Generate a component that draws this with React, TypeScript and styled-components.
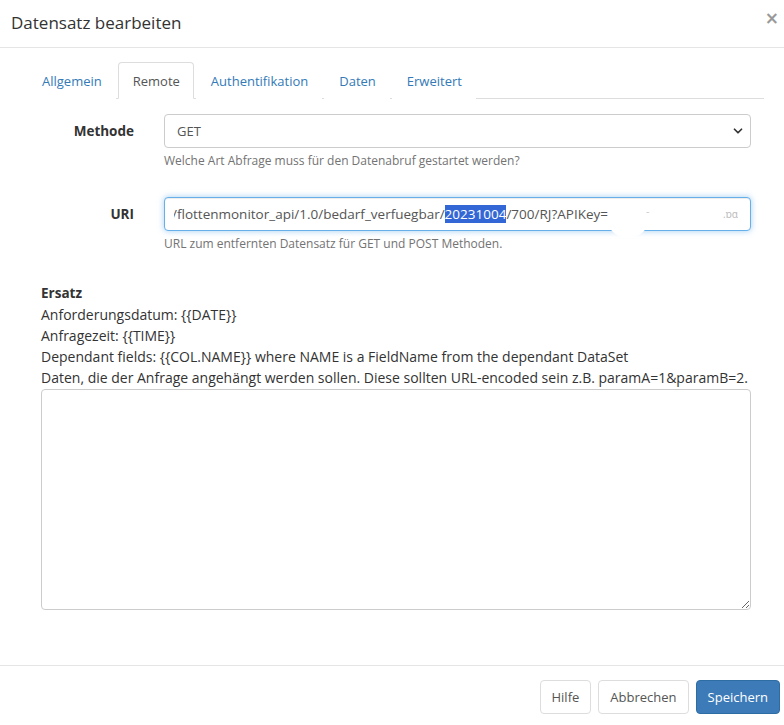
import styled, { createGlobalStyle } from 'styled-components'
import { ChevronDown } from 'lucide-react'

const GlobalStyle = createGlobalStyle`
  html, body {
    margin: 0;
    padding: 0;
    background: #fff;
  }
  body {
    font-family: "Open Sans", "Noto Sans", sans-serif;
    font-size: 13px;
    color: #333;
  }
  * {
    box-sizing: border-box;
  }
`

const tabs = ['Allgemein', 'Remote', 'Authentifikation', 'Daten', 'Erweitert']

const replacements = [
  'Anforderungsdatum: {{DATE}}',
  'Anfragezeit: {{TIME}}',
  'Dependant fields: {{COL.NAME}} where NAME is a FieldName from the dependant DataSet',
  'Daten, die der Anfrage angehängt werden sollen. Diese sollten URL-encoded sein z.B. paramA=1&paramB=2.'
]

export default function App() {
  return (
    <Modal>
      <GlobalStyle />
      <Header>
        <Title>Datensatz bearbeiten</Title>
        <Close>×</Close>
      </Header>

      <Body>
        <TabBar>
          {tabs.map(t => (
            <Tab key={t} $active={t === 'Remote'}>{t}</Tab>
          ))}
        </TabBar>

        <FormRow>
          <Label>Methode</Label>
          <Control>
            <SelectWrap>
              <Select defaultValue="GET">
                <option>GET</option>
                <option>POST</option>
              </Select>
              <Chevron size={14} strokeWidth={3} />
            </SelectWrap>
            <Help>Welche Art Abfrage muss für den Datenabruf gestartet werden?</Help>
          </Control>
        </FormRow>

        <FormRow>
          <Label>URI</Label>
          <Control>
            <FakeInput>
              <InputText>
                <Scrolled>/flottenmonitor_api/1.0/bedarf_verfuegbar/<Selected>20231004</Selected>/700/RJ?APIKey=</Scrolled>
                <Redacted>.. .  ̄</Redacted>
                <RedactedEnd>.ɒɑ</RedactedEnd>
              </InputText>
              <Blob />
            </FakeInput>
            <Help>URL zum entfernten Datensatz für GET und POST Methoden.</Help>
          </Control>
        </FormRow>

        <Replacements>
          <strong>Ersatz</strong>
          {replacements.map(r => (
            <Line key={r}>{r}</Line>
          ))}
        </Replacements>
        <TextArea />
      </Body>

      <Footer>
        <Button>Hilfe</Button>
        <Button>Abbrechen</Button>
        <Button $primary>Speichern</Button>
      </Footer>
    </Modal>
  )
}

const Modal = styled.div`
  width: 784px;
  height: 725px;
  display: flex;
  flex-direction: column;
  background: #fff;
`

const Header = styled.header`
  height: 48px;
  display: flex;
  align-items: center;
  justify-content: space-between;
  padding: 0 5px 2px 11px;
  border-bottom: 1px solid #e5e5e5;
`

const Title = styled.h4`
  margin: 0;
  font-size: 17px;
  font-weight: 400;
  color: #333;
`

const Close = styled.span`
  align-self: flex-start;
  margin-top: 10px;
  font-size: 17px;
  font-weight: 700;
  color: #999;
  line-height: 1;
  font-family: "DejaVu Sans", sans-serif;
`

const Body = styled.div`
  flex: 1;
  padding: 14px 20px 0 25px;
`

const TabBar = styled.ul`
  display: flex;
  list-style: none;
  margin: 0 0 15px 0;
  padding: 0;
  border-bottom: 1px solid #ddd;
`

const Tab = styled.li<{ $active?: boolean }>`
  margin: 0 2px -1px 0;
  padding: 9px 13px 8px 14px;
  border: 1px solid ${p => (p.$active ? '#ddd' : 'transparent')};
  border-bottom-color: ${p => (p.$active ? '#fff' : 'transparent')};
  border-radius: 4px 4px 0 0;
  background: #fff;
  color: ${p => (p.$active ? '#555' : '#337ab7')};
  font-size: 13px;
  &:first-child {
    padding-left: 16px;
  }
`

const FormRow = styled.div`
  display: grid;
  grid-template-columns: 139px 1fr;
  margin-bottom: 28px;
`

const Label = styled.label`
  font-weight: 700;
  text-align: right;
  padding: 8px 30px 0 0;
  font-size: 13.5px;
`

const Control = styled.div`
  width: 587px;
`

const SelectWrap = styled.div`
  position: relative;
`

const Select = styled.select`
  appearance: none;
  width: 100%;
  height: 34px;
  padding: 0 12px;
  border: 1px solid #ccc;
  border-radius: 4px;
  background: #fff;
  font-family: inherit;
  font-size: 13px;
  color: #555;
`

const Chevron = styled(ChevronDown)`
  position: absolute;
  right: 6px;
  top: 10px;
  color: #333;
  pointer-events: none;
`

const Help = styled.p`
  margin: 4px 0 0;
  color: #737373;
  font-size: 12px;
`

const FakeInput = styled.div`
  position: relative;
  height: 34px;
  border: 1px solid #66afe9;
  border-radius: 4px;
  box-shadow: inset 0 1px 1px rgba(0, 0, 0, 0.075), 0 0 6px rgba(102, 175, 233, 0.6);
  background: #fff;
`

const InputText = styled.div`
  position: relative;
  height: 100%;
  margin: 0 12px 0 9px;
  overflow: hidden;
  white-space: nowrap;
  display: flex;
  align-items: center;
  color: #555;
  font-size: 13.5px;
`

const Scrolled = styled.span`
  margin-left: -2px;
`

const Selected = styled.span`
  background: #3367d6;
  color: #fff;
`

const Redacted = styled.span`
  margin-left: 28px;
  color: #bbb;
  font-size: 9px;
`

const RedactedEnd = styled.span`
  margin-left: auto;
  color: #bbb;
  font-size: 10px;
`

const Blob = styled.div`
  position: absolute;
  left: 444px;
  top: 10px;
  width: 38px;
  height: 30px;
  border-radius: 50%;
  background: #fff;
`

const Replacements = styled.div`
  display: flex;
  flex-direction: column;
  margin: 31px 0 0 16px;
  line-height: 21px;
  font-size: 14px;
  & strong {
    font-weight: 700;
    font-size: 13.5px;
  }
`

const Line = styled.span``

const TextArea = styled.textarea`
  display: block;
  width: 710px;
  height: 221px;
  margin: 1px 0 0 16px;
  border: 1px solid #ccc;
  border-radius: 4px;
  resize: vertical;
  font-family: inherit;
`

const Footer = styled.footer`
  display: flex;
  justify-content: flex-end;
  gap: 7px;
  padding: 14px 4px 11px;
  border-top: 1px solid #e5e5e5;
`

const Button = styled.button<{ $primary?: boolean }>`
  height: 34px;
  padding: 0 11px;
  border: 1px solid ${p => (p.$primary ? '#2e6da4' : '#ddd')};
  border-radius: 4px;
  background: ${p => (p.$primary ? '#3d7ab8' : '#fff')};
  color: ${p => (p.$primary ? '#fff' : '#555')};
  font-family: inherit;
  font-size: 13px;
`
